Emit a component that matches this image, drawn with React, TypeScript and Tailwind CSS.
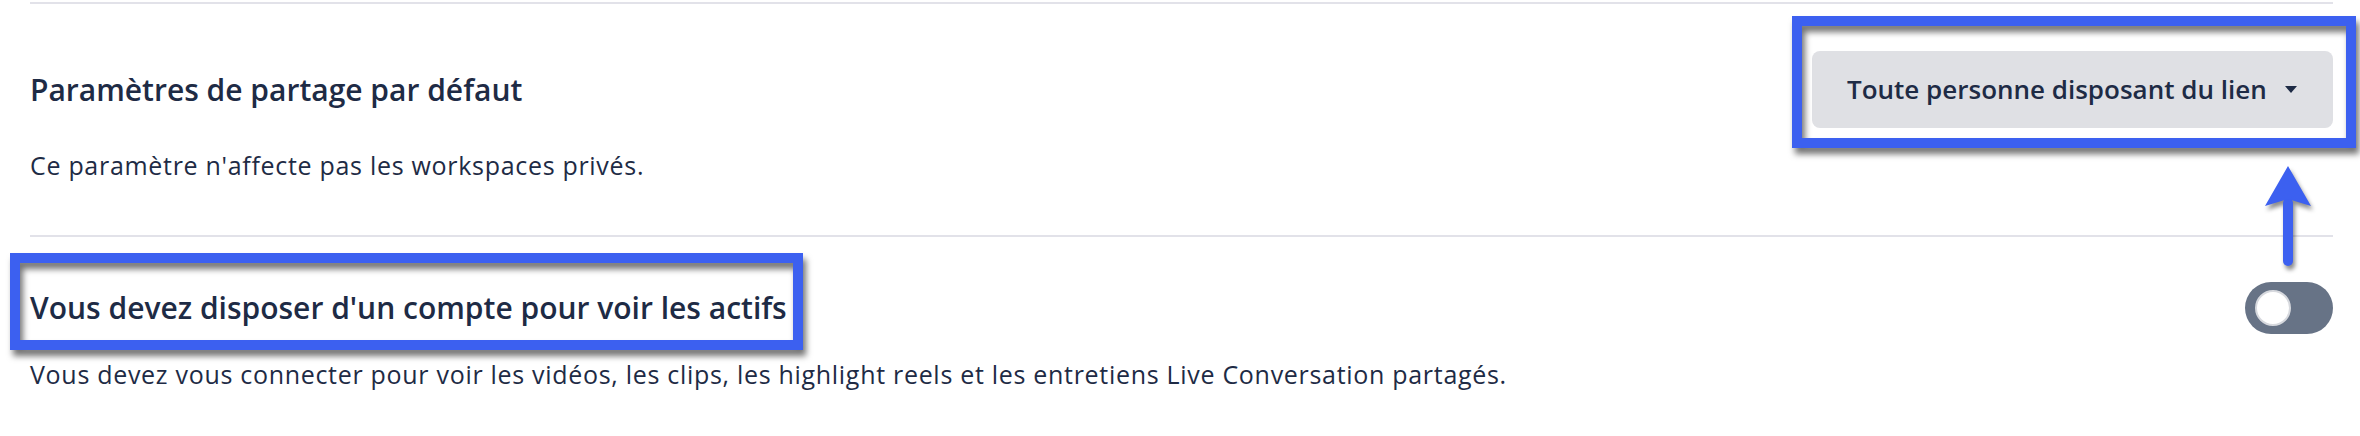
import React from "react";

const FONT = { fontFamily: "'Open Sans', 'Noto Sans', sans-serif" };

function Highlight({ className }: { className: string }) {
  return (
    <span
      className={`pointer-events-none absolute border-[10px] border-[#3c60f0] [filter:drop-shadow(3px_6px_3px_rgba(0,0,0,0.55))] ${className}`}
    />
  );
}

export default function App() {
  return (
    <div
      className="w-[2360px] h-[436px] overflow-hidden bg-white pl-[30px] pr-[27px] text-[#1e2b45]"
      style={FONT}
    >
      <div className="mt-[2px] h-[2px] bg-[#e2e2e9]" />
      {/* Section 1 */}
      <div className="pt-[47px]">
        <div className="flex h-[77px] items-center justify-between">
          <h2 className="text-[30px] font-semibold leading-[36px]">
            Paramètres de partage par défaut
          </h2>
          <div className="relative">
            <button className="flex h-[77px] w-[521px] items-center justify-between rounded-[8px] bg-[#dfe0e4] pl-[35px] pr-[36px] text-[26px] font-semibold text-[#1e2b45]">
              <span>Toute personne disposant du lien</span>
              <svg width="12" height="7" viewBox="0 0 12 7">
                <path d="M0 0 L12 0 L6 7 Z" fill="#1e2b45" />
              </svg>
            </button>
            <Highlight className="-top-[35px] -bottom-[20px] -left-[20px] -right-[23px]" />
          </div>
        </div>
        <p className="mt-[22px] text-[25px] leading-[30px] tracking-[0.7px]">
          Ce paramètre n'affecte pas les workspaces privés.
        </p>
      </div>
      <div className="mt-[55px] h-[2px] bg-[#e2e2e9]" />
      {/* Section 2 */}
      <div className="pt-[45px]">
        <div className="flex h-[52px] items-center justify-between">
          <h2 className="relative text-[30px] font-semibold leading-[36px]">
            Vous devez disposer d'un compte pour voir les actifs
            <Highlight className="-top-[37px] -bottom-[24px] -left-[20px] -right-[16px]" />
          </h2>
          <div className="relative">
            <div className="flex h-[52px] w-[88px] items-center rounded-full bg-[#677386] pl-[10px]">
              <div className="h-[36px] w-[36px] rounded-full border-2 border-[#d7d9de] bg-white" />
            </div>
            <svg
              className="absolute left-[18px] -top-[119px] [filter:drop-shadow(2px_4px_2px_rgba(0,0,0,0.45))]"
              width="50"
              height="108"
              viewBox="0 0 50 108"
            >
              <line x1="25" y1="40" x2="25" y2="98" stroke="#3c60f0" strokeWidth="10" strokeLinecap="round" />
              <path d="M25 3 L48 43 L25 36 L2 43 Z" fill="#3c60f0" />
            </svg>
          </div>
        </div>
        <p className="mt-[25px] text-[25px] leading-[30px] tracking-[0.7px]">
          Vous devez vous connecter pour voir les vidéos, les clips, les highlight reels et les entretiens Live Conversation partagés.
        </p>
      </div>
    </div>
  );
}
